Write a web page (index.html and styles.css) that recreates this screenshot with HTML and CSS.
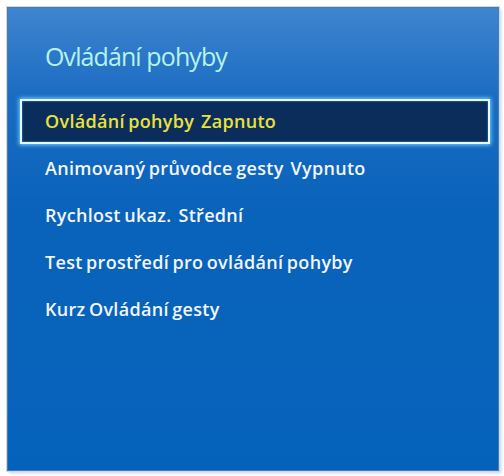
FILE: index.html
```html
<!DOCTYPE html>
<html lang="cs">
<head>
<meta charset="utf-8">
<link rel="stylesheet" href="styles.css">
</head>
<body>
<div class="panel">
  <h1 class="title">Ovládání pohyby</h1>
  <ul class="menu">
    <li class="item selected">Ovládání pohyby&nbsp; Zapnuto</li>
    <li class="item">Animovaný průvodce gesty&nbsp; Vypnuto</li>
    <li class="item">Rychlost ukaz.&nbsp; Střední</li>
    <li class="item">Test prostředí pro ovládání pohyby</li>
    <li class="item">Kurz Ovládání gesty</li>
  </ul>
</div>
</body>
</html>
```
FILE: styles.css
```css
html, body {
  margin: 0;
  padding: 0;
  background: #ffffff;
}
body {
  width: 504px;
  height: 476px;
  overflow: hidden;
  font-family: "Open Sans", "Noto Sans", sans-serif;
}
.panel {
  box-sizing: border-box;
  margin: 7px 0 0 7px;
  width: 492px;
  height: 464px;
  border: 1px solid #5579a6;
  box-shadow: 0 0 0 1px #c9dbeb, 2px 2px 3px #b7d6ec;
  background: linear-gradient(to bottom, #3f84cf 0px, #1a6cc2 90px, #0a63bb 200px, #0562ba 100%);
  padding: 31px 0 0 0;
}
.title {
  margin: 0 0 0 37px;
  font-weight: 500;
  font-size: 25px;
  line-height: 34px;
  color: #b5f3ea;
  letter-spacing: -0.9px;
}
.menu {
  list-style: none;
  margin: 26px 0 0 12px;
  padding: 0;
  width: 470px;
}
.item {
  box-sizing: border-box;
  height: 47px;
  line-height: 45px;
  padding-left: 25px;
  font-size: 18px;
  font-weight: 600;
  color: #f2f6fb;
  letter-spacing: 0.3px;
  word-spacing: -1.5px;
}
.item.selected {
  height: 45px;
  line-height: 41px;
  margin-bottom: 2px;
  background: #0b2d5c;
  border: 2px solid #e8fbff;
  box-shadow: 0 0 4px 1px #6fd3ff, inset 0 0 2px #4aa8e0;
  color: #e9e23c;
  padding-left: 23px;
}
```
